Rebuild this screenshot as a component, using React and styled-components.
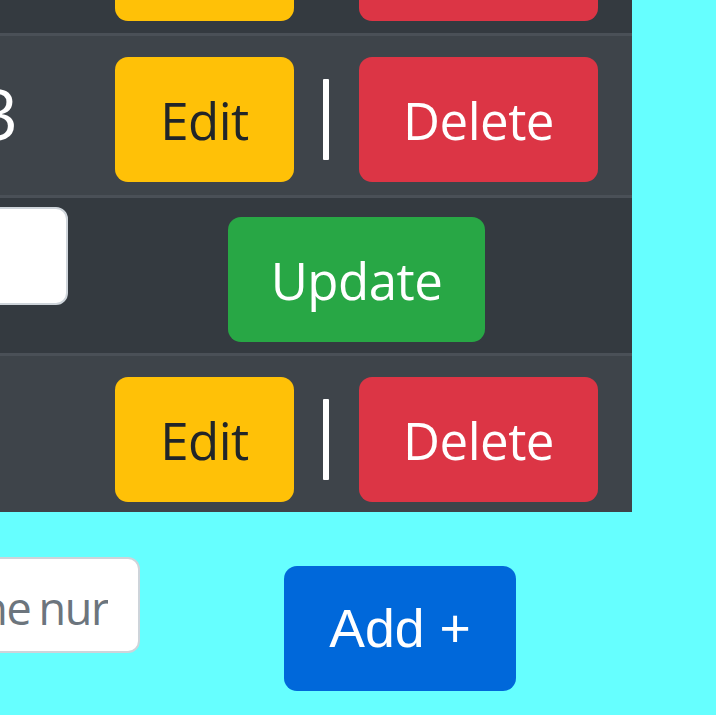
import React from "react";
import styled, { createGlobalStyle } from "styled-components";

const Global = createGlobalStyle`
  html, body { margin: 0; padding: 0; background: #66ffff; }
  body { font-family: "Open Sans", "Noto Sans", sans-serif; }
  * { box-sizing: border-box; }
`;

const Page = styled.div`
  width: 716px;
  height: 715px;
  overflow: hidden;
  background: #66ffff;
`;

const Table = styled.div`
  margin-top: -125px;
  margin-left: -300px;
  width: 932px;
  display: flex;
  flex-direction: column;
`;

const Row = styled.div`
  display: flex;
  background: ${(p) => (p.$striped ? "#3e444a" : "#343a40")};
  border-top: ${(p) => (p.$first ? "none" : "3px solid #4a5057")};
`;

const LeftCell = styled.div`
  width: 381px;
  display: flex;
  justify-content: flex-end;
  align-items: flex-start;
  padding-top: ${(p) => p.$pt || 0}px;
  padding-right: ${(p) => p.$pr || 0}px;
`;

const ActionCell = styled.div`
  flex: 1;
  display: flex;
  justify-content: center;
  align-items: center;
  padding-top: ${(p) => p.$pt}px;
  padding-bottom: ${(p) => p.$pb}px;
`;

const Num = styled.span`
  color: #ffffff;
  font-size: 70px;
  line-height: 1;
`;

const Button = styled.button`
  height: 125px;
  width: ${(p) => p.$w}px;
  border: none;
  border-radius: 13px;
  font-family: "Open Sans", "Noto Sans", sans-serif;
  font-size: 51px;
  letter-spacing: -0.5px;
  color: ${(p) => p.$fg || "#ffffff"};
  background: ${(p) => p.$bg};
  padding: 0;
  display: flex;
  align-items: center;
  justify-content: center;
  cursor: pointer;
`;

const Divider = styled.span`
  display: block;
  width: 6px;
  height: 81px;
  margin: 0 30px 0 29px;
  background: #ffffff;
  border-radius: 1px;
`;

const TextInput = styled.input`
  display: block;
  width: ${(p) => p.$w}px;
  height: ${(p) => p.$h}px;
  border: 2px solid #ced4da;
  border-radius: 12px;
  background: #ffffff;
  font-family: "Open Sans", "Noto Sans", sans-serif;
  font-size: 45px;
  letter-spacing: -1.4px;
  word-spacing: -2px;
  color: #495057;
  text-align: right;
  padding: 4px ${(p) => p.$padR || 0}px 0 0;
  outline: none;
  &::placeholder { color: #6c757d; }
`;

const Footer = styled.div`
  display: flex;
  align-items: flex-start;
  margin-left: -300px;
`;

const FooterInput = styled.div`
  margin-top: 45px;
`;

const AddButton = styled.button`
  margin-top: 54px;
  margin-left: 144px;
  width: 232px;
  height: 125px;
  border: none;
  border-radius: 13px;
  background: #0068da;
  color: #ffffff;
  font-family: "Liberation Sans", Arial, sans-serif;
  font-size: 53.5px;
  padding: 0;
  cursor: pointer;
`;

function Actions() {
  return (
    <>
      <Button $w={179} $bg="#ffc107" $fg="#212529">Edit</Button>
      <Divider />
      <Button $w={239} $bg="#dc3545">Delete</Button>
    </>
  );
}

export default function App() {
  return (
    <Page>
      <Global />
      <Table>
        <Row $first>
          <LeftCell />
          <ActionCell $pt={21} $pb={12}>
            <Actions />
          </ActionCell>
        </Row>
        <Row $striped>
          <LeftCell $pt={42} $pr={63}>
            <Num>3</Num>
          </LeftCell>
          <ActionCell $pt={21} $pb={13}>
            <Actions />
          </ActionCell>
        </Row>
        <Row>
          <LeftCell $pt={9} $pr={13}>
            <TextInput $w={300} $h={98} defaultValue="" />
          </LeftCell>
          <ActionCell $pt={19} $pb={11}>
            <Button $w={257} $bg="#28a745">Update</Button>
          </ActionCell>
        </Row>
        <Row $striped>
          <LeftCell />
          <ActionCell $pt={21} $pb={10}>
            <Actions />
          </ActionCell>
        </Row>
      </Table>
      <Footer>
        <FooterInput>
          <TextInput $w={440} $h={96} $padR={30} placeholder="Phone nur" />
        </FooterInput>
        <AddButton>Add +</AddButton>
      </Footer>
    </Page>
  );
}
